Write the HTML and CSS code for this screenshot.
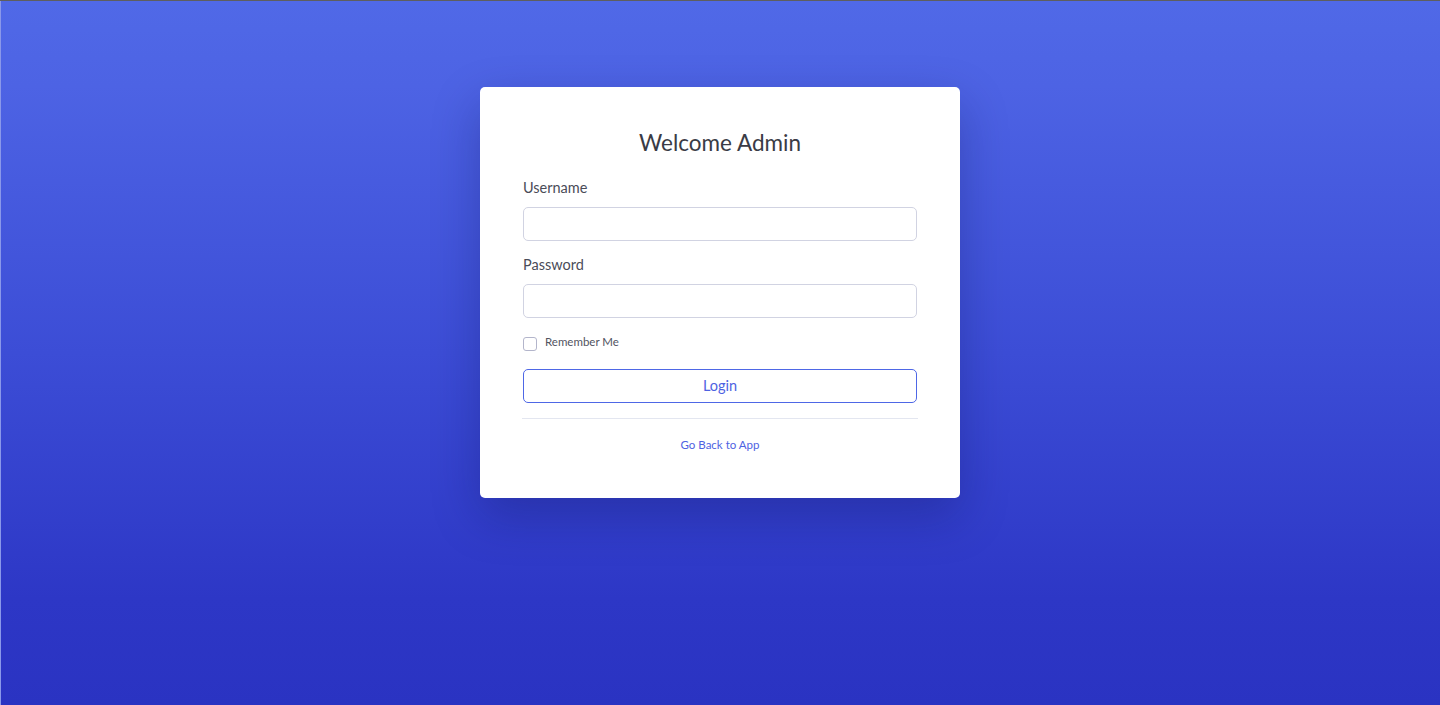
FILE: index.html
```html
<!DOCTYPE html>
<html lang="en">
<head>
<meta charset="utf-8">
<title>Admin Login</title>
<link rel="stylesheet" href="styles.css">
</head>
<body>
<div class="page">
  <div class="card">
    <h1 class="title">Welcome Admin</h1>
    <form class="form">
      <label class="label" for="username">Username</label>
      <input class="input" id="username" type="text">
      <label class="label label-pw" for="password">Password</label>
      <input class="input" id="password" type="password">
      <div class="check-row">
        <span class="checkbox"></span>
        <span class="check-label">Remember Me</span>
      </div>
      <button class="btn" type="button">Login</button>
    </form>
    <hr class="divider">
    <div class="back"><a class="back-link" href="#">Go Back to App</a></div>
  </div>
</div>
</body>
</html>
```
FILE: styles.css
```css
html, body {
  margin: 0;
  padding: 0;
  height: 100%;
}
body {
  font-family: Lato, "Noto Sans", sans-serif;
  background: #2c34c3;
}
.page {
  box-sizing: border-box;
  height: 705px;
  border-top: 1px solid #5e5e5e;
  box-shadow: inset 1px 0 0 #8a98ea;
  background: linear-gradient(180deg, #5069e7 0%, #4d63e4 12%, #3c4dd6 50%, #2d37c6 85%, #2a33c2 100%);
  display: flex;
  flex-direction: column;
  align-items: center;
  padding-top: 86px;
}
.card {
  box-sizing: border-box;
  width: 480px;
  height: 411px;
  background: #fff;
  border-radius: 5px;
  box-shadow: 0 18px 48px rgba(10, 15, 80, 0.28);
  padding: 43px 43px 0;
}
.title {
  margin: 0;
  font-size: 22.5px;
  line-height: 26px;
  font-weight: 400;
  color: #3a3b45;
  text-align: center;
}
.form {
  display: flex;
  flex-direction: column;
  margin-top: 21px;
}
.label {
  font-size: 14.5px;
  line-height: 21px;
  color: #4a4c58;
  margin-bottom: 9px;
}
.label-pw {
  margin-top: 13px;
}
.input {
  box-sizing: border-box;
  height: 34px;
  width: 100%;
  border: 1px solid #d1d3e2;
  border-radius: 5px;
  background: #fff;
  margin: 0;
}
.check-row {
  display: flex;
  align-items: flex-start;
  margin-top: 18px;
  height: 14px;
}
.checkbox {
  box-sizing: border-box;
  width: 14px;
  height: 14px;
  border: 1px solid #b3b5cb;
  border-radius: 3px;
  margin-top: 1px;
}
.check-label {
  margin-left: 8px;
  font-size: 11.5px;
  line-height: 11px;
  color: #52545f;
}
.btn {
  box-sizing: border-box;
  margin-top: 19px;
  height: 34px;
  width: 100%;
  background: #fff;
  border: 1px solid #4e67e6;
  border-radius: 5px;
  color: #4e62e2;
  font-family: Lato, "Noto Sans", sans-serif;
  font-size: 14.5px;
  padding: 0 0 2px;
}
.divider {
  margin: 15px -1px 0;
  border: 0;
  border-top: 1px solid #e3e6f0;
}
.back {
  text-align: center;
  margin-top: 16px;
  line-height: 16px;
}
.back-link {
  font-size: 11.5px;
  color: #4e62e2;
  text-decoration: none;
}
```
